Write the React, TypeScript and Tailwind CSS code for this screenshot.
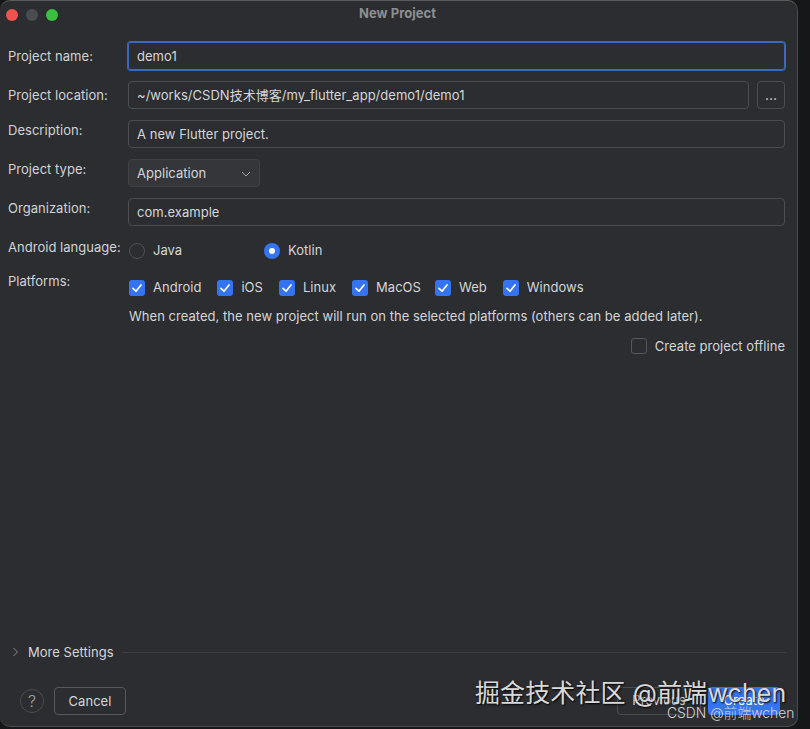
function CheckBox({ label, className }: { label: string; className?: string }) {
  return (
    <div className={className ? `flex items-center gap-2 ${className}` : "flex items-center gap-2"}>
      <div className="flex h-4 w-4 items-center justify-center rounded-[3px] bg-[#3574f0]">
        <svg viewBox="0 0 16 16" className="h-4 w-4" fill="none" aria-hidden="true">
          <path d="M4 8.4 7 11.2 12 5" stroke="white" strokeWidth="1.7" strokeLinecap="round" strokeLinejoin="round" />
        </svg>
      </div>
      <span>{label}</span>
    </div>
  );
}

function FormRow({
  label,
  centered,
  children,
}: {
  label: string;
  centered?: boolean;
  children: React.ReactNode;
}) {
  return (
    <div className="flex h-7 items-start">
      <label className={centered ? "w-[120px] shrink-0 pt-[4px] leading-[20px] text-[#d2d3d6]" : "w-[120px] shrink-0 leading-[20px] text-[#d2d3d6]"}>
        {label}
      </label>
      {children}
    </div>
  );
}

const inputClass =
  "flex h-7 flex-1 items-center rounded-[4px] border border-[#4b4d51] pl-[8px] pt-[1px] text-[#d5d6d9]";

export default function App() {
  return (
    <div className="h-[729px] w-[810px] overflow-hidden bg-[#161718] font-['Inter','Noto_Sans_CJK_SC',sans-serif] text-[13px] tracking-[0.03px] text-[#d5d6d9]">
      <div className="relative flex h-[727px] w-[798px] flex-col rounded-[10px] border border-[#4a4b4e] border-l-0 border-t-[#5a5b5e] bg-[#2b2d30]">
        <div className="relative flex h-7 shrink-0 items-center gap-2 pl-[6px]">
          <div className="h-3 w-3 rounded-full bg-[#f2524c]" />
          <div className="h-3 w-3 rounded-full bg-[#4b4c4f]" />
          <div className="h-3 w-3 rounded-full bg-[#37c23f]" />
          <div className="absolute inset-x-0 top-[3px] pr-[2px] text-center text-[13px] font-bold text-[#8e8f92]">
            New Project
          </div>
        </div>

        <div className="flex flex-col gap-[11px] pl-2 pr-[12px] pt-[13px]">
          <FormRow label="Project name:" centered>
            <div className="flex h-7 flex-1 items-center rounded-[3px] border border-[#3a69c4] pl-[8px] pt-[1px] ring-1 ring-[#3a69c4]">
              demo1
            </div>
          </FormRow>

          <FormRow label="Project location:" centered>
            <div className="flex flex-1 gap-2">
              <div className={inputClass}>~/works/CSDN技术博客/my_flutter_app/demo1/demo1</div>
              <div className="flex h-7 w-7 items-center justify-center rounded-[4px] border border-[#4b4d51] text-[14px] leading-none">
                ...
              </div>
            </div>
          </FormRow>

          <FormRow label="Description:">
            <div className={inputClass}>A new Flutter project.</div>
          </FormRow>

          <FormRow label="Project type:">
            <div className="flex h-7 w-[132px] items-center justify-between rounded-[4px] border border-[#3f4145] bg-[#34363a] pl-[8px] pr-[8px] pt-[1px]">
              <span>Application</span>
              <svg viewBox="0 0 10 6" className="h-[6px] w-[10px]" fill="none" aria-hidden="true">
                <path d="M1 1 5 5 9 1" stroke="#a5a6a9" strokeWidth="1" />
              </svg>
            </div>
          </FormRow>

          <FormRow label="Organization:">
            <div className={inputClass}>com.example</div>
          </FormRow>
        </div>

        <div className="mt-[11px] flex h-[28px] items-center pl-2">
          <span className="w-[121px] shrink-0 pb-[6px] text-[#d2d3d6]">Android language:</span>
          <div className="flex w-[135px] items-center gap-2">
            <div className="h-4 w-4 rounded-full border border-[#4f5155]" />
            <span>Java</span>
          </div>
          <div className="flex items-center gap-2">
            <div className="flex h-4 w-4 items-center justify-center rounded-full bg-[#3574f0]">
              <div className="h-[6px] w-[6px] rounded-full bg-white" />
            </div>
            <span>Kotlin</span>
          </div>
        </div>

        <div className="mt-[9px] flex h-[28px] items-center pl-2">
          <span className="w-[121px] shrink-0 pb-[12px] text-[#d2d3d6]">Platforms:</span>
          <div className="flex items-center gap-[16px]">
            <CheckBox label="Android" />
            <CheckBox label="iOS" />
            <CheckBox label="Linux" />
            <CheckBox label="MacOS" className="mr-[-2px]" />
            <CheckBox label="Web" />
            <CheckBox label="Windows" />
          </div>
        </div>

        <div className="mt-[4px] pl-[129px] leading-[20px]">
          When created, the new project will run on the selected platforms (others can be added later).
        </div>

        <div className="mt-[10px] flex items-center justify-end gap-2 pr-[12px] leading-[20px]">
          <div className="h-4 w-4 rounded-[3px] border border-[#55575b]" />
          <span>Create project offline</span>
        </div>

        <div className="flex-1" />

        <div className="flex items-center gap-2 pl-3 pr-[10px]">
          <svg viewBox="0 0 8 10" className="h-[10px] w-2" fill="none" aria-hidden="true">
            <path d="M1.5 1 5.5 5 1.5 9" stroke="#8b8c8f" strokeWidth="1" />
          </svg>
          <span>More Settings</span>
          <div className="h-px flex-1 bg-[#3c3e42]" />
        </div>

        <div className="mb-[11px] mt-[25px] flex items-center pl-5 pr-[17px]">
          <div className="flex h-6 w-6 items-center justify-center rounded-full border border-[#4b4d51] text-[16px] font-light text-[#a0a1a4]">
            ?
          </div>
          <div className="ml-[10px] flex h-7 w-[72px] items-center justify-center rounded-[4px] border border-[#55575b] pt-[1px]">
            Cancel
          </div>
          <div className="flex-1" />
          <div className="flex h-7 w-[84px] items-center justify-center rounded-[4px] border border-[#4b4d51]">
            Previous
          </div>
          <div className="ml-[7px] flex h-7 w-[72px] items-center justify-center rounded-[4px] bg-[#3574f0] text-white">
            Create
          </div>

          <div className="absolute bottom-[17px] left-[475px] whitespace-nowrap text-[25px] leading-[32px] tracking-[0.12px] text-[#d9d9d9] [text-shadow:1px_1px_2px_#000]">
            掘金技术社区 @前端wchen
          </div>
          <div className="absolute bottom-[5px] left-[667px] whitespace-nowrap text-[13.8px] font-light leading-[16px] text-[#d4d4d4]">
            CSDN @前端wchen
          </div>
        </div>
      </div>
    </div>
  );
}
